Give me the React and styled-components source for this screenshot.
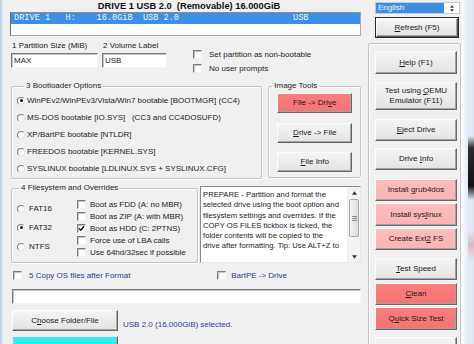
import React from "react";
import styled, { createGlobalStyle } from "styled-components";

const GlobalStyle = createGlobalStyle`
  html, body {
    margin: 0;
    padding: 0;
    background: #f0f0f0;
  }
  body {
    width: 474px;
    height: 344px;
    overflow: hidden;
    font-family: "Liberation Sans", Arial, sans-serif;
  }
`;

const Window = styled.div`
  display: flex;
  width: 474px;
  height: 344px;
  overflow: hidden;
  background: #f0f0f0;
  font-size: 8px;
  color: #1c1c1c;
`;

const FrameLeft = styled.div`
  width: 3px;
  flex: none;
  background: linear-gradient(to right, #b8cde5, #dde8f3);
`;

const FrameRight = styled.div`
  width: 12px;
  flex: none;
  background:
    linear-gradient(to bottom, transparent 0, transparent 136px, #2b2b2b 148px, #111 186px, transparent 200px) right top / 6px 100% no-repeat,
    linear-gradient(to bottom, transparent 0, transparent 230px, #d9b9c4 245px, transparent 262px) right top / 6px 100% no-repeat,
    linear-gradient(to right, #fbfcfe, #e6edf6 40%, #dce6f2);
`;

const Content = styled.div`
  flex: 1;
  display: flex;
  align-items: flex-start;
  gap: 7px;
  padding-left: 7px;
`;

const LeftCol = styled.div`
  width: 351px;
  flex: none;
  display: flex;
  flex-direction: column;

  & > * {
    flex-shrink: 0;
  }
`;

const RightCol = styled.div`
  width: 93px;
  flex: none;
  display: flex;
  flex-direction: column;

  & > * {
    flex-shrink: 0;
  }
`;

const Title = styled.div`
  height: 12px;
  line-height: 12px;
  padding-left: 7px;
  text-align: center;
  font-weight: bold;
  font-size: 9.3px;
  white-space: pre;
  color: #111;
`;

const ListBox = styled.div`
  height: 24px;
  box-sizing: border-box;
  background: #fff;
  border: 1px solid #a9a9a9;
  border-left-color: #6c6c6c;
  border-top-color: #8c8c8c;
`;

const ListRow = styled.div`
  display: flex;
  height: 11px;
  line-height: 11px;
  padding-left: 3px;
  background: #3d90e8;
  color: #eef5ff;
  font-family: "Liberation Mono", "Courier New", monospace;
  font-size: 8.6px;
  white-space: pre;
`;

const Cell = styled.span`
  width: ${(p) => p.$w}px;
  flex: none;
`;

const SettingsRow = styled.div`
  display: flex;
  align-items: flex-start;
  height: 45px;
`;

const Field = styled.div`
  display: flex;
  flex-direction: column;
  gap: 2px;
  padding-top: 5px;
  width: ${(p) => p.$w}px;
  margin-left: ${(p) => p.$ml || 0}px;
`;

const FieldLabel = styled.div`
  height: 10px;
  line-height: 10px;
  padding-left: ${(p) => p.$pl || 0}px;
  white-space: nowrap;
`;

const TextBox = styled.div`
  height: ${(p) => p.$h || 15}px;
  box-sizing: border-box;
  margin-left: ${(p) => p.$ml || 0}px;
  padding-left: 2px;
  line-height: 13px;
  background: #fff;
  border: 1px solid;
  border-color: #7b7b7b #f6f6f6 #f6f6f6 #7b7b7b;
  box-shadow: inset 1px 1px 0 #c2c2c2;
`;

const CheckStack = styled.div`
  display: flex;
  flex-direction: column;
  padding-top: 11px;
  margin-left: 26px;
`;

const Option = styled.label`
  display: flex;
  align-items: center;
  gap: ${(p) => p.$gap || 7}px;
  height: ${(p) => p.$h || 14}px;
  padding-left: ${(p) => p.$pl || 0}px;
  white-space: pre;
  color: ${(p) => (p.$navy ? "#2b3a97" : "inherit")};
`;

const Box = styled.span`
  width: 9px;
  height: 9px;
  flex: none;
  box-sizing: border-box;
  display: flex;
  align-items: center;
  justify-content: center;
  background: #fff;
  border: 1px solid;
  border-color: #7a7a7a #f2f2f2 #f2f2f2 #7a7a7a;
  box-shadow: inset 1px 1px 0 #c4c4c4;
`;

const Radio = styled.span`
  width: 8px;
  height: 8px;
  flex: none;
  box-sizing: border-box;
  display: flex;
  align-items: center;
  justify-content: center;
  border-radius: 50%;
  background: #fff;
  border: 1px solid;
  border-color: #7e7e7e #e6e6e6 #e6e6e6 #7e7e7e;

  &::after {
    content: "";
    width: 3px;
    height: 3px;
    border-radius: 50%;
    background: ${(p) => (p.$on ? "#141414" : "transparent")};
  }
`;

const GroupRow = styled.div`
  display: flex;
  align-items: flex-start;
  gap: ${(p) => p.$gap}px;
  margin-top: ${(p) => p.$mt || 0}px;
`;

const Group = styled.fieldset`
  margin: 0 0 0 ${(p) => p.$ml || 0}px;
  padding: ${(p) => p.$pad || "0"};
  min-width: 0;
  width: ${(p) => p.$w}px;
  height: ${(p) => p.$h}px;
  box-sizing: border-box;
  border: 1px solid #c4c4c4;
  border-radius: 2px;
  box-shadow: inset 1px 1px 0 #fff, 1px 1px 0 #fff;
`;

const Legend = styled.legend`
  margin-left: ${(p) => p.$lm || 7}px;
  padding: 0 2px;
  line-height: 10px;
  font-size: 8px;
`;

const Column = styled.div`
  display: flex;
  flex-direction: column;
  width: ${(p) => (p.$w ? `${p.$w}px` : "auto")};
  padding-top: ${(p) => p.$pt || 0}px;
`;

const FsBody = styled.div`
  display: flex;
  padding-left: 5px;
`;

const Btn = styled.button`
  display: flex;
  flex-direction: column;
  align-items: center;
  justify-content: center;
  width: ${(p) => p.$w || 82}px;
  height: ${(p) => p.$h || 22}px;
  margin-top: ${(p) => p.$mt || 0}px;
  margin-left: ${(p) => p.$ml || 0}px;
  padding: 0;
  box-sizing: border-box;
  font-family: "Liberation Sans", Arial, sans-serif;
  font-size: 8px;
  line-height: 10px;
  color: #1a1a1a;
  background: ${(p) =>
    p.$tone === "red"
      ? "linear-gradient(#fb7d7d, #f57474)"
      : p.$tone === "pink"
      ? "linear-gradient(#ffbdbd, #fdb3b3)"
      : p.$tone === "cyan"
      ? "linear-gradient(#2af3f3, #1ee9ea)"
      : "linear-gradient(#f5f5f5, #e3e3e3)"};
  border: 1px solid;
  border-color: #fdfdfd #666 #666 #fdfdfd;
  box-shadow: inset -1px -1px 0 #a3a3a3;
  flex: none;

  u {
    text-decoration: underline;
    text-underline-offset: 1px;
  }
`;

const DefaultBtn = styled(Btn)`
  outline: 1px solid #2a2a2a;
  outline-offset: 0;
  border-color: #fdfdfd #555 #555 #fdfdfd;
`;

const ToolsBody = styled.div`
  display: flex;
  flex-direction: column;
  padding-left: 8px;
`;

const InfoBox = styled.div`
  display: flex;
  width: 161px;
  height: 77px;
  margin-top: 3px;
  box-sizing: border-box;
  background: #fff;
  border: 1px solid;
  border-color: #8a8a8a #e9e9e9 #e9e9e9 #8a8a8a;
`;

const InfoText = styled.div`
  flex: 1;
  padding: 3px 0 0 2px;
  font-size: 7.7px;
  line-height: 10.3px;
  white-space: nowrap;
  overflow: hidden;
`;

const ScrollBar = styled.div`
  width: 12px;
  flex: none;
  display: flex;
  flex-direction: column;
  background: #f3f3f3;
  border-left: 1px solid #ececec;
`;

const ScrollArrow = styled.div`
  height: 11px;
  display: flex;
  align-items: center;
  justify-content: center;
`;

const Thumb = styled.div`
  height: 38px;
  margin: 1px 1px 0;
  box-sizing: border-box;
  display: flex;
  flex-direction: column;
  align-items: center;
  justify-content: center;
  gap: 1px;
  border: 1px solid #a7a7a7;
  border-radius: 2px;
  background: linear-gradient(to right, #f4f4f4, #dcdcdc);

  span {
    width: 5px;
    height: 1px;
    background: #8a8a8a;
  }
`;

const ScrollFill = styled.div`
  flex: 1;
`;

const CopyRow = styled.div`
  display: flex;
  justify-content: space-between;
  margin-top: 6px;
  padding-right: 74px;
`;

const PathRow = styled.div`
  margin-top: 8px;
`;

const ActionRow = styled.div`
  display: flex;
  align-items: flex-end;
  gap: 5px;
  margin-top: ${(p) => p.$mt || 0}px;
  padding-left: 2px;
`;

const Status = styled.div`
  height: 12px;
  line-height: 12px;
  color: #2b3a97;
  white-space: nowrap;
`;

const LangBox = styled.div`
  display: flex;
  width: 85px;
  height: 12px;
  margin: 2px 0 0 7px;
  box-sizing: border-box;
  background: #fff;
  border: 1px solid #c9c9c9;
`;

const LangValue = styled.div`
  flex: 1;
  padding-left: 2px;
  line-height: 10px;
  background: #3d8fe6;
  color: #f4f8ff;
`;

const LangSpin = styled.div`
  width: 15px;
  display: flex;
  flex-direction: column;
  align-items: center;
  justify-content: center;
  gap: 1px;
`;

const SidePanel = styled.div`
  display: flex;
  flex-direction: column;
  margin-top: 6px;
  height: 310px;
  box-sizing: border-box;
  padding: 7px 0 0 6px;
  border: 1px solid #c4c4c4;
  border-radius: 2px;
  box-shadow: inset 1px 1px 0 #fff, 1px 1px 0 #fff;
`;

const Tri = ({ up, size = 5 }) => (
  <svg width={size} height={Math.ceil(size / 2) + 1} viewBox="0 0 6 4">
    <path d={up ? "M0 4 L3 0 L6 4 Z" : "M0 0 L3 4 L6 0 Z"} fill="#3c3c3c" />
  </svg>
);

const Check = ({ on }) => (
  <Box>
    {on && (
      <svg width="7" height="7" viewBox="0 0 7 7">
        <path d="M1 3.4 L2.8 5.3 L6 1.2" fill="none" stroke="#111" strokeWidth="1.4" />
      </svg>
    )}
  </Box>
);

const bootOptions = [
  "WinPEv2/WinPEv3/Vista/Win7 bootable [BOOTMGR] (CC4)",
  "MS-DOS bootable [IO.SYS]   (CC3 and CC4DOSUFD)",
  "XP/BartPE bootable [NTLDR]",
  "FREEDOS bootable [KERNEL.SYS]",
  "SYSLINUX bootable [LDLINUX.SYS + SYSLINUX.CFG]",
];

const overrides = [
  ["Boot as FDD (A: no MBR)", false],
  ["Boot as ZIP (A: with MBR)", false],
  ["Boot as HDD (C: 2PTNS)", true],
  ["Force use of LBA calls", false],
  ["Use 64hd/32sec if possible", false],
];

const infoLines = [
  "PREPARE - Partition and format the",
  "selected drive using the boot option and",
  "filesystem settings and overrides. If the",
  "COPY OS FILES tickbox is ticked, the",
  "folder contents will be copied to the",
  "drive after formatting. Tip: Use ALT+Z to",
];

export default function App() {
  return (
    <>
      <GlobalStyle />
      <Window>
        <FrameLeft />
        <Content>
          <LeftCol>
            <Title>DRIVE 1 USB 2.0  (Removable) 16.000GiB</Title>
            <ListBox>
              <ListRow>
                <Cell $w={279}>DRIVE 1   H:    16.0GiB  USB 2.0</Cell>
                <span>USB</span>
              </ListRow>
            </ListBox>

            <SettingsRow>
              <Field $w={88}>
                <FieldLabel $pl={2}>1 Partition Size (MiB)</FieldLabel>
                <TextBox $ml={1}>MAX</TextBox>
              </Field>
              <Field $w={65} $ml={4}>
                <FieldLabel $pl={1}>2 Volume Label</FieldLabel>
                <TextBox>USB</TextBox>
              </Field>
              <CheckStack>
                <Option>
                  <Check />
                  Set partition as non-bootable
                </Option>
                <Option>
                  <Check />
                  No user prompts
                </Option>
              </CheckStack>
            </SettingsRow>

            <GroupRow $gap={6}>
              <Group $w={252} $h={98} $ml={1} $pad="1px 0 0 5px">
                <Legend>3 Bootloader Options</Legend>
                {bootOptions.map((label, i) => (
                  <Option key={label} $h={17} $gap={2}>
                    <Radio $on={i === 0} />
                    {label}
                  </Option>
                ))}
              </Group>
              <Group $w={93} $h={97}>
                <Legend $lm={3}>Image Tools</Legend>
                <ToolsBody>
                  <Btn $w={75} $h={20} $mt={2} $tone="red">
                    <span>
                      File -&gt; Dri<u>v</u>e
                    </span>
                  </Btn>
                  <Btn $w={75} $h={20} $mt={10}>
                    <span>
                      <u>D</u>rive -&gt; File
                    </span>
                  </Btn>
                  <Btn $w={75} $h={20} $mt={9}>
                    <span>
                      <u>F</u>ile Info
                    </span>
                  </Btn>
                </ToolsBody>
              </Group>
            </GroupRow>

            <GroupRow $gap={2} $mt={4}>
              <Group $w={187} $h={80} $ml={1}>
                <Legend>4 Filesystem and Overrides</Legend>
                <FsBody>
                  <Column $w={60} $pt={6}>
                    {["FAT16", "FAT32", "NTFS"].map((fs) => (
                      <Option key={fs} $h={19} $gap={4}>
                        <Radio $on={fs === "FAT32"} />
                        {fs}
                      </Option>
                    ))}
                  </Column>
                  <Column $pt={5}>
                    {overrides.map(([label, on]) => (
                      <Option key={label} $h={12} $gap={4}>
                        <Check on={on} />
                        {label}
                      </Option>
                    ))}
                  </Column>
                </FsBody>
              </Group>
              <InfoBox>
                <InfoText>
                  {infoLines.map((l) => (
                    <div key={l}>{l}</div>
                  ))}
                </InfoText>
                <ScrollBar>
                  <ScrollArrow>
                    <Tri up />
                  </ScrollArrow>
                  <Thumb>
                    <span />
                    <span />
                    <span />
                  </Thumb>
                  <ScrollFill />
                  <ScrollArrow>
                    <Tri />
                  </ScrollArrow>
                </ScrollBar>
              </InfoBox>
            </GroupRow>

            <CopyRow>
              <Option $h={12} $gap={7} $pl={3} $navy>
                <Check />5 Copy OS files after Format
              </Option>
              <Option $h={12} $gap={5} $navy>
                <Check />
                BartPE -&gt; Drive
              </Option>
            </CopyRow>

            <PathRow>
              <TextBox $ml={2} $h={15} />
            </PathRow>

            <ActionRow $mt={6}>
              <Btn $w={106} $h={21}>
                <span>
                  C<u>h</u>oose Folder/File
                </span>
              </Btn>
              <Status>USB 2.0 (16.000GiB) selected.</Status>
            </ActionRow>

            <ActionRow $mt={5}>
              <Btn $w={106} $h={24} $tone="cyan">
                <span>
                  <u>6</u> Prepare Drive
                </span>
              </Btn>
            </ActionRow>
          </LeftCol>

          <RightCol>
            <LangBox>
              <LangValue>English</LangValue>
              <LangSpin>
                <Tri up size={4} />
                <Tri size={4} />
              </LangSpin>
            </LangBox>
            <DefaultBtn $w={82} $h={19} $mt={4} $ml={8}>
              <span>
                <u>R</u>efresh (F5)
              </span>
            </DefaultBtn>

            <SidePanel>
              <Btn $h={23} $mt={0}>
                <span>
                  <u>H</u>elp (F1)
                </span>
              </Btn>
              <Btn $h={28} $mt={8}>
                <span>
                  Test using <u>Q</u>EMU
                </span>
                <span>Emulator (F11)</span>
              </Btn>
              <Btn $mt={9}>
                <span>
                  <u>E</u>ject Drive
                </span>
              </Btn>
              <Btn $mt={7}>
                <span>
                  Drive <u>I</u>nfo
                </span>
              </Btn>
              <Btn $mt={9} $tone="pink">
                <span>
                  Install <u>g</u>rub4dos
                </span>
              </Btn>
              <Btn $mt={2} $h={23} $tone="pink">
                <span>
                  Install sys<u>l</u>inux
                </span>
              </Btn>
              <Btn $mt={2} $tone="pink">
                <span>
                  Create Ext<u>2</u> FS
                </span>
              </Btn>
              <Btn $mt={8}>
                <span>
                  <u>T</u>est Speed
                </span>
              </Btn>
              <Btn $mt={3} $tone="red">
                <span>
                  <u>C</u>lean
                </span>
              </Btn>
              <Btn $mt={2} $h={23} $tone="red">
                <span>
                  Q<u>u</u>ick Size Test
                </span>
              </Btn>
              <Btn $mt={7}>
                <span>
                  E<u>x</u>it
                </span>
              </Btn>
            </SidePanel>
          </RightCol>
        </Content>
        <FrameRight />
      </Window>
    </>
  );
}
